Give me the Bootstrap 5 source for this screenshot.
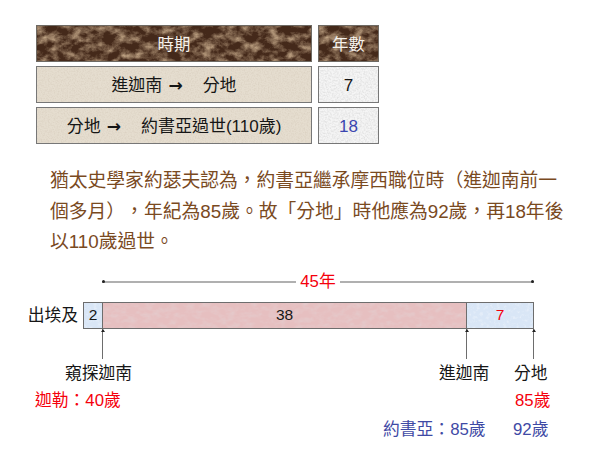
<!DOCTYPE html>
<html lang="zh-Hant">
<head>
<meta charset="utf-8">
<title>約書亞年歲</title>
<link href="https://cdn.jsdelivr.net/npm/bootstrap@5.3.0/dist/css/bootstrap.min.css" rel="stylesheet">
<style>
html,body{margin:0;background:#fff;}
body{width:616px;height:462px;overflow:hidden;color:#161616;font-family:"Liberation Sans","Noto Sans CJK TC",sans-serif;text-spacing-trim:space-all;font-feature-settings:"palt" 0,"chws" 0;}
.slide-wrap{padding-top:25px;}
.period-grid{display:grid;grid-template-columns:276px 61px;grid-auto-rows:37px;column-gap:6px;row-gap:4px;margin-left:36px;width:343px;}
.cellbox{display:flex;align-items:center;justify-content:center;border:1px solid #777;font-size:16.4px;line-height:1;white-space:pre;padding-top:1px;}
.row-text{font-size:17px;}
.num-text{font-size:17px;}
.arrow-glyph{font-family:"DejaVu Sans",sans-serif;font-size:17px;font-weight:bold;margin:0 20px 0 6px;}
.tex-marble{color:#f6f2ec;border-color:#6e6a64;background-color:#44291a;background-image:url("data:image/svg+xml,%3Csvg xmlns='http://www.w3.org/2000/svg' width='300' height='60'%3E%3Cfilter id='f' x='0' y='0' width='100%25' height='100%25'%3E%3CfeTurbulence type='fractalNoise' baseFrequency='.09 .12' numOctaves='5' seed='11'/%3E%3CfeColorMatrix values='0 0 0 0 .5 0 0 0 0 .35 0 0 0 0 .22 2.2 0 0 0 -.85'/%3E%3C/filter%3E%3Crect width='300' height='60' filter='url(%23f)'/%3E%3C/svg%3E");}
.tex-sand{background-color:#e5ddcf;background-image:url("data:image/svg+xml,%3Csvg xmlns='http://www.w3.org/2000/svg' width='300' height='60'%3E%3Cfilter id='f' x='0' y='0' width='100%25' height='100%25'%3E%3CfeTurbulence type='fractalNoise' baseFrequency='.7' numOctaves='2' seed='3'/%3E%3CfeColorMatrix values='0 0 0 0 .62 0 0 0 0 .54 0 0 0 0 .44 .9 0 0 0 -.36'/%3E%3C/filter%3E%3Crect width='300' height='60' filter='url(%23f)'/%3E%3C/svg%3E");}
.tex-white{background-color:#f5f5f5;background-image:url("data:image/svg+xml,%3Csvg xmlns='http://www.w3.org/2000/svg' width='100' height='60'%3E%3Cfilter id='f' x='0' y='0' width='100%25' height='100%25'%3E%3CfeTurbulence type='fractalNoise' baseFrequency='.6' numOctaves='2' seed='5'/%3E%3CfeColorMatrix values='0 0 0 0 .6 0 0 0 0 .6 0 0 0 0 .6 1 0 0 0 -.35'/%3E%3C/filter%3E%3Crect width='100' height='60' filter='url(%23f)'/%3E%3C/svg%3E");}
.num-blue{color:#3a45b0;}
.intro-text{margin:22px 0 0 50px;font-size:18.8px;line-height:30.5px;color:#7a4a1f;white-space:nowrap;}
.dim-row{margin:14px 0 0 102px;width:432px;height:20px;}
.dim-line{flex:1 1 0;height:2px;background:#b0b0b0;position:relative;}
.dim-line.lft::before,.dim-line.rgt::after{content:"";position:absolute;top:-.5px;width:3px;height:3px;background:#222;border-radius:50%;}
.dim-line.lft::before{left:0;}
.dim-line.rgt::after{right:0;}
.dim-label{color:#f5000c;font-size:16.8px;line-height:20px;padding:0 4px;}
.bar-row{margin:10px 0 0 0;height:27px;}
.bar-name{width:83px;padding-right:5px;text-align:right;font-size:16.8px;line-height:27px;}
.bar-track{width:451px;height:27px;border:1px solid #6d6d6d;}
.seg{display:flex;align-items:center;justify-content:center;font-size:15.5px;height:100%;}
.seg-a{width:19px;border-right:1px solid #6d6d6d;}
.seg-b{width:364px;border-right:1px solid #6d6d6d;}
.seg-c{flex:1 1 0;color:#f5000c;}
.tex-blue{background-color:#d9e6f6;background-image:url("data:image/svg+xml,%3Csvg xmlns='http://www.w3.org/2000/svg' width='100' height='40'%3E%3Cfilter id='f' x='0' y='0' width='100%25' height='100%25'%3E%3CfeTurbulence type='fractalNoise' baseFrequency='.3' numOctaves='3' seed='4'/%3E%3CfeColorMatrix values='0 0 0 0 1 0 0 0 0 1 0 0 0 0 1 1 0 0 0 -.5'/%3E%3C/filter%3E%3Crect width='100' height='40' filter='url(%23f)'/%3E%3C/svg%3E");}
.tex-rose{background-color:#e6bfc0;background-image:url("data:image/svg+xml,%3Csvg xmlns='http://www.w3.org/2000/svg' width='400' height='40'%3E%3Cfilter id='f' x='0' y='0' width='100%25' height='100%25'%3E%3CfeTurbulence type='fractalNoise' baseFrequency='.12 .2' numOctaves='3' seed='9'/%3E%3CfeColorMatrix values='0 0 0 0 .78 0 0 0 0 .62 0 0 0 0 .63 1.5 0 0 0 -.6'/%3E%3C/filter%3E%3Crect width='400' height='40' filter='url(%23f)'/%3E%3C/svg%3E");}
.canvas-area{position:relative;height:133px;}
.tick{position:absolute;top:0;width:1px;height:30px;background:#6d6d6d;}
.tick::before{content:"";position:absolute;top:0;left:-1.5px;border-left:2px solid transparent;border-right:2px solid transparent;border-bottom:3px solid #222;}
.tl-label{position:absolute;font-size:16.8px;line-height:20px;white-space:nowrap;}
.tl-red{color:#f5000c;}
.tl-blue{color:#3f4aa5;}
</style>
</head>
<body>
<div class="slide-wrap">
  <div class="period-grid">
    <div class="cellbox tex-marble">時期</div>
    <div class="cellbox tex-marble">年數</div>
    <div class="cellbox tex-sand row-text">進迦南<span class="arrow-glyph">→</span>分地</div>
    <div class="cellbox tex-white num-text">7</div>
    <div class="cellbox tex-sand row-text">分地<span class="arrow-glyph">→</span>約書亞過世(110歲)</div>
    <div class="cellbox tex-white num-text num-blue">18</div>
  </div>
  <p class="intro-text">猶太史學家約瑟夫認為，約書亞繼承摩西職位時（進迦南前一<br>個多月），年紀為85歲。故「分地」時他應為92歲，再18年後<br>以110歲過世。</p>
  <div class="dim-row d-flex align-items-center">
    <div class="dim-line lft"></div>
    <div class="dim-label">45年</div>
    <div class="dim-line rgt"></div>
  </div>
  <div class="bar-row d-flex">
    <div class="bar-name">出埃及</div>
    <div class="bar-track d-flex">
      <div class="seg seg-a tex-blue">2</div>
      <div class="seg seg-b tex-rose">38</div>
      <div class="seg seg-c tex-blue">7</div>
    </div>
  </div>
  <div class="canvas-area">
    <div class="tick" style="left:102px"></div>
    <div class="tick" style="left:466px"></div>
    <div class="tick" style="left:533px"></div>
    <div class="tl-label" style="left:65px;top:35px">窺探迦南</div>
    <div class="tl-label" style="left:439px;top:35px">進迦南</div>
    <div class="tl-label" style="left:514px;top:35px">分地</div>
    <div class="tl-label tl-red" style="left:35px;top:62px">迦勒：40歲</div>
    <div class="tl-label tl-red" style="left:515px;top:62px">85歲</div>
    <div class="tl-label tl-blue" style="left:383px;top:91px">約書亞：85歲</div>
    <div class="tl-label tl-blue" style="left:513px;top:91px">92歲</div>
  </div>
</div>
<script src="https://cdn.jsdelivr.net/npm/bootstrap@5.3.0/dist/js/bootstrap.bundle.min.js"></script>
</body>
</html>
